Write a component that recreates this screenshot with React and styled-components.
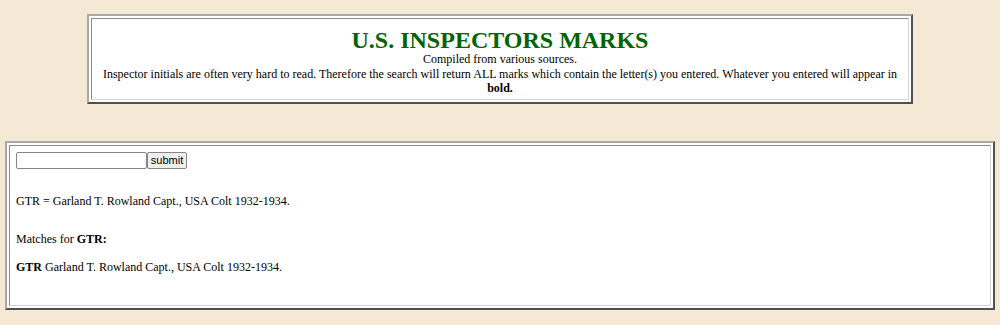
import React from 'react';
import styled, { createGlobalStyle } from 'styled-components';

const GlobalStyle = createGlobalStyle`
	body {
		margin: 0;
		background: #f5e9d5;
		font-family: "Liberation Serif", "Times New Roman", serif;
		font-size: 12px;
		color: #000;
	}
`;

const Page = styled.div`
	width: 1000px;
	height: 325px;
	padding-top: 14px;
	box-sizing: border-box;
`;

const Frame = styled.div`
	box-sizing: border-box;
	width: ${(p) => p.$width}px;
	margin: ${(p) => p.$margin};
	border: 2px solid;
	border-color: #a8a8a8 #505050 #505050 #a8a8a8;
	background: #fff;
	padding: 2px;
`;

const Cell = styled.div`
	border: 1px solid;
	border-color: #8a8a8a #d4d4d4 #d4d4d4 #8a8a8a;
	padding: ${(p) => p.$padding};
	text-align: ${(p) => p.$align || 'left'};
`;

const Title = styled.h1`
	margin: 0;
	font-size: 24px;
	line-height: 24px;
	font-weight: bold;
	color: #006400;
`;

const Note = styled.div`
	line-height: 14.5px;
`;

const SearchForm = styled.form`
	display: flex;
	align-items: stretch;
	height: 17px;
	margin: 0;
`;

const SearchInput = styled.input`
	box-sizing: border-box;
	width: 131px;
	height: 17px;
	margin: 0;
	padding: 1px 2px;
	border: 1px solid #858585;
	border-radius: 2px;
	background: #fff;
	font-size: 11px;
`;

const SubmitButton = styled.button`
	box-sizing: border-box;
	width: 40px;
	height: 17px;
	margin: 0;
	padding: 0;
	border: 1px solid #858585;
	border-radius: 2px;
	background: #efefef;
	font-family: "Liberation Sans", Arial, sans-serif;
	font-size: 11px;
	color: #000;
`;

const Line = styled.p`
	margin: ${(p) => p.$top}px 0 0;
	line-height: 15px;
`;

export default function App() {
	return (
		<Page>
			<GlobalStyle />
			<Frame $width={826} $margin="0 auto">
				<Cell $padding="9px 4px 3px" $align="center">
					<Title>U.S. INSPECTORS MARKS</Title>
					<Note>Compiled from various sources.</Note>
					<Note>
						Inspector initials are often very hard to read. Therefore the search
						will return ALL marks which contain the letter(s) you entered.
						Whatever you entered will appear in <b>bold.</b>
					</Note>
				</Cell>
			</Frame>
			<Frame $width={990} $margin="37px 0 0 5px">
				<Cell $padding="6px 6px 30px">
					<SearchForm onSubmit={(e) => e.preventDefault()}>
						<SearchInput type="text" />
						<SubmitButton type="submit">submit</SubmitButton>
					</SearchForm>
					<Line $top={25.5}>GTR = Garland T. Rowland Capt., USA Colt 1932-1934.</Line>
					<Line $top={23}>
						Matches for <b>GTR:</b>
					</Line>
					<Line $top={13}>
						<b>GTR</b> Garland T. Rowland Capt., USA Colt 1932-1934.
					</Line>
				</Cell>
			</Frame>
		</Page>
	);
}
